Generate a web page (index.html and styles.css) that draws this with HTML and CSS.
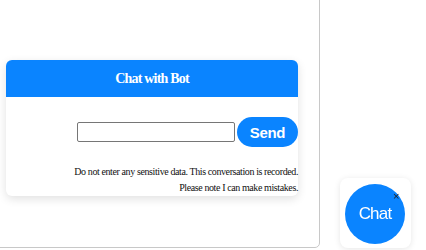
FILE: index.html
```html
<!DOCTYPE html>
<html lang="en">
<head>
    <meta charset="UTF-8">
    <meta name="viewport" content="width=device-width, initial-scale=1.0">
    <title>Chat with Bot</title>
    <link rel="stylesheet" href="styles.css">
</head>
<body>

    <!-- main page frame -->
    <div class="page">
        <div class="chat-box">
            <div class="chat-header">Chat with Bot</div>
            <div class="chat-body">
                <div class="chat-input-row">
                    <input type="text" class="chat-input">
                    <button class="send-btn">Send</button>
                </div>
                <p class="notice">Do not enter any sensitive data. This conversation is recorded.</p>
                <p class="notice">Please note I can make mistakes.</p>
            </div>
        </div>
    </div>

    <!-- floating chat launcher -->
    <div class="launcher">
        <button class="launcher-btn">Chat</button>
        <span class="launcher-close">&times;</span>
    </div>

</body>
</html>
```

FILE: styles.css
```css
/* base */
body {
    margin: 0;
    padding: 0;
    background-color: #fff;
    font-family: 'Liberation Serif', 'Times New Roman', serif;
    overflow: hidden;
}

/* page frame, its top and left edges sit off screen */
.page {
    width: 321px;
    height: 249px;
    margin: -1px 0 0 -1px;
    border: 1px solid #c8c8c8;
    border-radius: 0 0 5px 0;
    padding: 60px 0 0 6px;
    box-sizing: border-box;
}

/* chat window */
.chat-box {
    width: 292px;
    background-color: #fff;
    border-radius: 6px;
    box-shadow: 0 3px 10px rgba(0, 0, 0, 0.12);
}

.chat-header {
    background-color: #0a84ff;
    color: #fff;
    font-weight: bold;
    font-size: 14px;
    letter-spacing: -0.8px;
    text-align: center;
    height: 37px;
    line-height: 37px;
    border-radius: 6px 6px 0 0;
}

.chat-body {
    padding: 20px 0 0 0;
    text-align: right;
}

.chat-input-row {
    display: flex;
    justify-content: flex-end;
    align-items: center;
    gap: 2px;
}

.chat-input {
    width: 158px;
    height: 20px;
    box-sizing: border-box;
    border: 1px solid #767676;
    border-radius: 2px;
    padding: 1px 2px;
    margin: 0;
}

.send-btn {
    width: 61px;
    height: 30px;
    border: none;
    border-radius: 15px;
    background-color: #0a84ff;
    color: #fff;
    font-family: 'Liberation Sans', Arial, sans-serif;
    font-weight: bold;
    font-size: 15px;
    letter-spacing: -0.3px;
    padding: 0;
    margin: 0;
}

.notice {
    margin: 0;
    font-size: 10px;
    letter-spacing: -0.4px;
    line-height: 16px;
    color: #111;
}

.notice:first-of-type {
    margin-top: 17px;
}

/* floating launcher in the corner */
.launcher {
    position: fixed;
    left: 340px;
    top: 178px;
    width: 71px;
    height: 70px;
    background-color: #fff;
    border-radius: 8px;
    box-shadow: 0 1px 6px rgba(0, 0, 0, 0.1);
}

.launcher-btn {
    position: absolute;
    left: 5px;
    top: 6px;
    width: 60px;
    height: 60px;
    border: none;
    border-radius: 50%;
    background-color: #0a84ff;
    color: #fff;
    font-family: 'Liberation Sans', Arial, sans-serif;
    font-size: 17px;
    letter-spacing: -0.8px;
    padding: 0;
}

.launcher-close {
    position: absolute;
    left: 53px;
    top: 13px;
    font-family: 'Liberation Sans', Arial, sans-serif;
    font-size: 11px;
    line-height: 11px;
    color: #222;
}
```
